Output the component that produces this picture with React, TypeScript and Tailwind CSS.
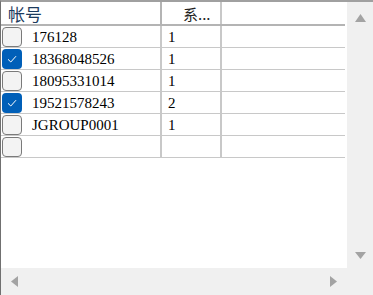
import React from "react";

const rows = [
  { id: "176128", n: "1", checked: false },
  { id: "18368048526", n: "1", checked: true },
  { id: "18095331014", n: "1", checked: false },
  { id: "19521578243", n: "2", checked: true },
  { id: "JGROUP0001", n: "1", checked: false },
  { id: "", n: "", checked: false },
];

function Box({ checked }: { checked: boolean }) {
  if (checked) {
    return (
      <div className="w-[20px] h-[20px] rounded-[4px] bg-[#005fb8] flex items-center justify-center">
        <svg width="12" height="12" viewBox="0 0 12 12">
          <path d="M2 6.3 L4.8 9 L10 3.2" fill="none" stroke="#ffffff" strokeWidth="1" />
        </svg>
      </div>
    );
  }
  return <div className="w-[20px] h-[20px] rounded-[4px] border border-[#7a7a7a] bg-[#f3f3f3]" />;
}

export default function App() {
  return (
    <div className="w-[373px] h-[295px] bg-white border-t-2 border-l border-t-[#a0a0a0] border-l-[#707070] grid grid-cols-[1fr_26px] grid-rows-[1fr_27px] overflow-hidden">
      <div className="bg-white overflow-hidden pr-[2px]">
        <div className="flex h-[24px] border-b-2 border-[#b4b4b4] items-center">
          <div className="w-[161px] h-full border-r-2 border-[#b4b4b4] pl-[7px] flex items-center text-[17px] text-[#1c3b5e] font-['Noto_Sans_CJK_SC',sans-serif] leading-none">
            帐号
          </div>
          <div className="w-[60px] h-full border-r-2 border-[#c8c8c8] pl-[21px] flex items-center text-[15px] text-[#222] font-['Noto_Sans_CJK_SC',sans-serif] leading-none">
            系...
          </div>
          <div className="flex-1" />
        </div>
        {rows.map((r, i) => (
          <div key={i} className="flex h-[22px] border-b border-[#c8c8c8]">
            <div className="w-[161px] border-r-2 border-[#c8c8c8] flex items-center pl-[1px] gap-[10px]">
              <Box checked={r.checked} />
              <span className="pt-[2px] text-[15px] text-black font-['Liberation_Serif',serif] leading-none">{r.id}</span>
            </div>
            <div className="w-[60px] border-r-2 border-[#c8c8c8] flex items-center pl-[6px] pt-[2px] text-[15px] text-black font-['Liberation_Serif',serif] leading-none">
              {r.n}
            </div>
            <div className="flex-1" />
          </div>
        ))}
      </div>
      <div className="bg-[#f0f0f0] flex flex-col items-center justify-between pt-[12px] pb-[9px]">
        <svg width="11" height="8" viewBox="0 0 11 8">
          <path d="M5.5 0 L11 8 L0 8 Z" fill="#a3a3a3" />
        </svg>
        <svg width="11" height="7" viewBox="0 0 11 7">
          <path d="M0 0 L11 0 L5.5 7 Z" fill="#a3a3a3" />
        </svg>
      </div>
      <div className="bg-[#f0f0f0] flex items-center justify-between pl-[10px] pr-[10px]">
        <svg width="7" height="11" viewBox="0 0 7 11">
          <path d="M7 0 L7 11 L0 5.5 Z" fill="#a3a3a3" />
        </svg>
        <svg width="7" height="11" viewBox="0 0 7 11">
          <path d="M0 0 L7 5.5 L0 11 Z" fill="#a3a3a3" />
        </svg>
      </div>
      <div className="bg-[#f0f0f0]" />
    </div>
  );
}
